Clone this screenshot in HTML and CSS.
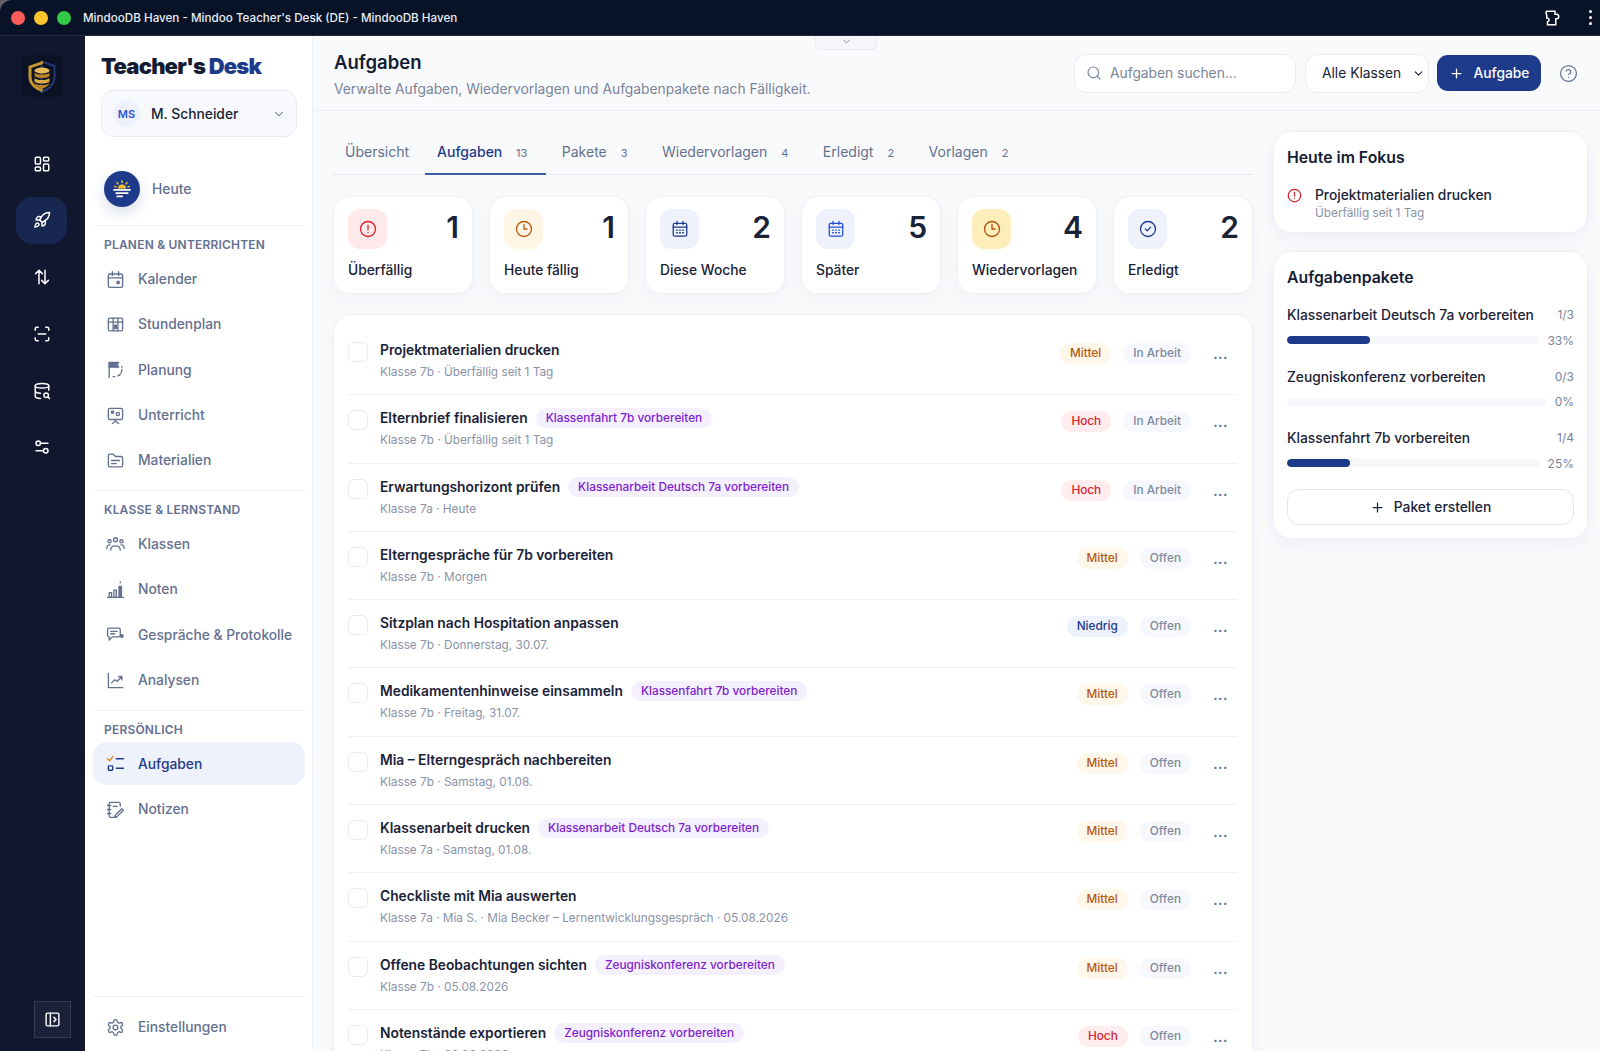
FILE: index.html
```html
<!DOCTYPE html>
<html lang="de">
<head>
  <meta charset="UTF-8" />
  <title>MindooDB Haven - Mindoo Teacher's Desk (DE)</title>
  <link rel="stylesheet" href="styles.css">
</head>
<body>
<div class="window">
  <div class="titlebar">
    <span class="light red"></span><span class="light yellow"></span><span class="light green"></span>
    <span class="win-title">MindooDB Haven - Mindoo Teacher's Desk (DE) - MindooDB Haven</span>
    <svg class="puzzle" viewBox="0 0 24 24"><path d="M5 3h11v4h2a2 2 0 0 1 0 6h-1v8H6v-4a2.5 2.5 0 0 0-1-5V9L4 4z"/></svg>
    <span class="kebab"><i></i><i></i><i></i></span>
  </div>

  <div class="app">
    <nav class="rail">
      <div class="logo">
        <svg viewBox="0 0 29 33" width="29" height="33">
          <path d="M14.500 1.500 27.500 6v11c0 7-5 12-13 15z" fill="none" stroke="#24396f" stroke-width="2"/>
          <path d="M16 1 1.500 6v11c0 7 5.500 12 13.500 15l1-2.500C9 27 4.500 23 4.500 16.500V8L16 4z" fill="#c8962f"/>
          <ellipse cx="15" cy="10.500" rx="7.500" ry="3" fill="#e9bb57"/>
          <path d="M7.500 12.500c2 2.800 13 2.800 15 0v3.500c-2 2.800-13 2.800-15 0z" fill="#b58427"/>
          <path d="M7.500 18c2 2.800 13 2.800 15 0v3.500c-2 2.800-13 2.800-15 0z" fill="#d9a944"/>
          <path d="M7.500 23c2 2.800 13 2.800 15 0v1c-3 3-5 4-7.500 5-3-1-5.500-2.500-7.500-5z" fill="#b58427"/>
        </svg>
      </div>
      <a class="rail-btn"><svg class="ico" viewBox="0 0 24 24"><rect x="3" y="3" width="7" height="9" rx="1.5"/><rect x="14" y="3" width="7" height="5" rx="1.5"/><rect x="14" y="12" width="7" height="9" rx="1.5"/><rect x="3" y="16" width="7" height="5" rx="1.5"/></svg></a>
      <a class="rail-btn on"><svg class="ico" viewBox="0 0 24 24"><path d="M4.5 16.500c-1.500 1.300-2 5-2 5s3.700-.5 5-2c.7-.8.7-2.100-.1-2.900a2.200 2.200 0 0 0-2.900-.1z"/><path d="m12 15-3-3a22 22 0 0 1 2-3.950A12.900 12.900 0 0 1 22 2c0 2.720-.78 7.500-6 11a22 22 0 0 1-4 2z"/><path d="M9 12H4s.55-3.030 2-4c1.620-1.080 5 0 5 0"/><path d="M12 15v5s3.030-.55 4-2c1.080-1.620 0-5 0-5"/></svg></a>
      <a class="rail-btn"><svg class="ico" viewBox="0 0 24 24"><path d="M8 3 3.500 7.500M8 3l4.500 4.500M8 3v18M16 21l-4.500-4.500M16 21l4.500-4.500M16 21V3"/></svg></a>
      <a class="rail-btn"><svg class="ico" viewBox="0 0 24 24"><path d="M3 7V5a2 2 0 0 1 2-2h2M17 3h2a2 2 0 0 1 2 2v2M21 17v2a2 2 0 0 1-2 2h-2M7 21H5a2 2 0 0 1-2-2v-2M7 12h10"/></svg></a>
      <a class="rail-btn"><svg class="ico" viewBox="0 0 24 24"><ellipse cx="12" cy="5" rx="9" ry="3"/><path d="M3 5v14c0 1.500 3 2.800 7 3M21 5v6M3 12c0 1.500 3 2.800 7 3"/><circle cx="17.500" cy="17.500" r="3"/><path d="m20 20 2 2"/></svg></a>
      <a class="rail-btn"><svg class="ico" viewBox="0 0 24 24"><circle cx="7" cy="7" r="3"/><path d="M10 7h10M4 17h10"/><circle cx="17" cy="17" r="3"/></svg></a>
      <a class="collapse"><svg class="ico" viewBox="0 0 24 24"><rect x="3" y="3" width="18" height="18" rx="2"/><path d="M9 3v18M14 9l3 3-3 3"/></svg></a>
    </nav>

    <aside class="sidebar">
      <div class="brand">Teacher's <b>Desk</b></div>
      <div class="user-select">
        <span class="avatar">MS</span>
        <span class="user-name">M. Schneider</span>
        <svg class="ico chev" viewBox="0 0 24 24"><path d="m6 9 6 6 6-6"/></svg>
      </div>
      <a class="today">
        <span class="today-ico">
          <svg viewBox="0 0 24 24" width="22" height="22">
            <path d="M7.500 11.500a4.500 4.500 0 0 1 9 0z" fill="#f4c430"/>
            <path d="M12 2.500v3M6 4.500l2 2.500M18 4.500l-2 2.500M3.500 9l2.500 1M20.500 9 18 10" stroke="#f4c430" stroke-width="1.600" fill="none"/>
            <path d="M2.500 13h19M5 16.500h14M6 20h7" stroke="#fff" stroke-width="1.800" fill="none"/>
          </svg>
        </span>
        Heute
      </a>
      <hr class="nav-sep">
      <div class="nav-label">PLANEN &amp; UNTERRICHTEN</div>
      <a class="nav-item"><svg class="ico" viewBox="0 0 24 24"><rect x="3" y="5" width="18" height="17" rx="2"/><path d="M8 2v5M16 2v5M3 10h18"/><rect x="14" y="14.500" width="2.500" height="2.500" fill="currentColor"/></svg>Kalender</a>
      <a class="nav-item"><svg class="ico" viewBox="0 0 24 24"><rect x="3" y="4" width="18" height="16" rx="2"/><path d="M3 9h18M9 4v16M15 4v16"/><rect x="11" y="13" width="2" height="4" fill="currentColor"/></svg>Stundenplan</a>
      <a class="nav-item"><svg class="ico" viewBox="0 0 24 24"><path d="M4 22V3"/><path d="M4 3h12l-2 3 2 3H4z" fill="currentColor"/><path d="M20 12c0 4-2 7-5 8M9 21h2M20 8v1" stroke-dasharray="4 2"/></svg>Planung</a>
      <a class="nav-item"><svg class="ico" viewBox="0 0 24 24"><rect x="3" y="3" width="18" height="14" rx="2"/><rect x="7" y="6.500" width="2.500" height="2.500" fill="currentColor"/><circle cx="15" cy="10" r="2"/><path d="M12 17v2M12 19l-4 3M12 19l4 3"/></svg>Unterricht</a>
      <a class="nav-item"><svg class="ico" viewBox="0 0 24 24"><path d="M3 6a2 2 0 0 1 2-2h4l3 3h7a2 2 0 0 1 2 2v9a2 2 0 0 1-2 2H5a2 2 0 0 1-2-2z"/><path d="M7 12h10M7 16h6"/></svg>Materialien</a>
      <hr class="nav-sep">
      <div class="nav-label">KLASSE &amp; LERNSTAND</div>
      <a class="nav-item"><svg class="ico wide" viewBox="0 0 24 24"><circle cx="12" cy="6" r="2.500"/><circle cx="4.500" cy="8" r="2"/><circle cx="19.500" cy="8" r="2"/><path d="M6 19c0-7 12-7 12 0M1 17c0-3 2-5 4-4.500M23 17c0-3-2-5-4-4.500"/></svg>Klassen</a>
      <a class="nav-item"><svg class="ico" viewBox="0 0 24 24"><path d="M2 22h20"/><rect x="4" y="16" width="3" height="6"/><rect x="10" y="13" width="3" height="9"/><rect x="16.500" y="8" width="3" height="14" fill="currentColor"/><path d="M18 2.500v1"/></svg>Noten</a>
      <a class="nav-item"><svg class="ico" viewBox="0 0 24 24"><path d="M4 4h12a2 2 0 0 1 2 2v7a2 2 0 0 1-2 2H8l-4 4v-4a2 2 0 0 1-2-2V6a2 2 0 0 1 2-2z"/><path d="M6 8h8M6 11h5"/><circle cx="20" cy="14" r="2.500" fill="currentColor" stroke="none"/></svg>Gespräche &amp; Protokolle</a>
      <a class="nav-item"><svg class="ico" viewBox="0 0 24 24"><path d="M3 3v18h18"/><path d="m7 15 4-4 3 2 6-6M16 7h4v4"/></svg>Analysen</a>
      <hr class="nav-sep">
      <div class="nav-label">PERSÖNLICH</div>
      <a class="nav-item active">
        <svg class="ico" viewBox="0 0 24 24"><path d="m2 6 2.500 2.500L9 3" stroke="#d98a1f"/><path d="M13 6h9M13 18h9"/><rect x="3" y="15" width="5.500" height="5.500" rx="1"/></svg>Aufgaben</a>
      <a class="nav-item"><svg class="ico" viewBox="0 0 24 24"><path d="M18 8V5a2 2 0 0 0-2-2H6a2 2 0 0 0-2 2v15a2 2 0 0 0 2 2h7"/><path d="M2 7h4M2 12h4M2 17h4M9 8h5"/><path d="m20 11 2 2-8 8-3 1 1-3z"/></svg>Notizen</a>
      <div class="sidebar-foot">
        <a class="nav-item"><svg class="ico" viewBox="0 0 24 24"><path d="M12.200 2h-.4a2 2 0 0 0-2 2v.2a2 2 0 0 1-1 1.700l-.4.300a2 2 0 0 1-2 0l-.2-.1a2 2 0 0 0-2.700.7l-.2.400a2 2 0 0 0 .7 2.700l.2.100a2 2 0 0 1 1 1.700v.5a2 2 0 0 1-1 1.700l-.2.100a2 2 0 0 0-.7 2.700l.2.400a2 2 0 0 0 2.700.7l.2-.1a2 2 0 0 1 2 0l.4.300a2 2 0 0 1 1 1.700v.2a2 2 0 0 0 2 2h.4a2 2 0 0 0 2-2v-.2a2 2 0 0 1 1-1.700l.4-.3a2 2 0 0 1 2 0l.2.100a2 2 0 0 0 2.700-.7l.2-.4a2 2 0 0 0-.7-2.700l-.2-.1a2 2 0 0 1-1-1.700v-.5a2 2 0 0 1 1-1.700l.2-.1a2 2 0 0 0 .7-2.700l-.2-.4a2 2 0 0 0-2.700-.7l-.2.100a2 2 0 0 1-2 0l-.4-.3a2 2 0 0 1-1-1.700V4a2 2 0 0 0-2-2z"/><circle cx="12" cy="12" r="3"/></svg>Einstellungen</a>
      </div>
    </aside>

    <main class="main">
      <div class="pull-tab"><svg class="ico" viewBox="0 0 24 24"><path d="m6 9 6 6 6-6"/></svg></div>
      <header class="page-head">
        <div class="page-titles">
          <h1>Aufgaben</h1>
          <p>Verwalte Aufgaben, Wiedervorlagen und Aufgabenpakete nach Fälligkeit.</p>
        </div>
        <div class="search">
          <svg class="ico" viewBox="0 0 24 24"><circle cx="11" cy="11" r="8"/><path d="m21 21-4.300-4.300"/></svg>
          Aufgaben suchen...
        </div>
        <div class="class-select">Alle Klassen <svg class="ico" viewBox="0 0 24 24"><path d="m6 9 6 6 6-6"/></svg></div>
        <button class="add-btn"><svg class="ico" viewBox="0 0 24 24"><path d="M5 12h14M12 5v14"/></svg>Aufgabe</button>
        <svg class="ico help" viewBox="0 0 24 24"><circle cx="12" cy="12" r="10"/><path d="M9.100 9a3 3 0 0 1 5.800 1c0 2-3 3-3 3M12 17h.01"/></svg>
      </header>

      <div class="content">
        <section class="col-left">
          <div class="tabs">
            <a class="tab">Übersicht</a>
            <a class="tab current">Aufgaben <small>13</small></a>
            <a class="tab">Pakete <small>3</small></a>
            <a class="tab">Wiedervorlagen <small>4</small></a>
            <a class="tab">Erledigt <small>2</small></a>
            <a class="tab">Vorlagen <small>2</small></a>
          </div>

          <div class="stats">
            <div class="stat">
              <div class="stat-top"><span class="stat-ico red"><svg class="ico" viewBox="0 0 24 24"><circle cx="12" cy="12" r="10"/><path d="M12 7v6M12 16.500h.01"/></svg></span><strong>1</strong></div>
              <span class="stat-label">Überfällig</span>
            </div>
            <div class="stat">
              <div class="stat-top"><span class="stat-ico amber"><svg class="ico" viewBox="0 0 24 24"><circle cx="12" cy="12" r="10"/><path d="M12 6v6h4"/></svg></span><strong>1</strong></div>
              <span class="stat-label">Heute fällig</span>
            </div>
            <div class="stat">
              <div class="stat-top"><span class="stat-ico navy"><svg class="ico" viewBox="0 0 24 24"><use href="#cal"/></svg></span><strong>2</strong></div>
              <span class="stat-label">Diese Woche</span>
            </div>
            <div class="stat">
              <div class="stat-top"><span class="stat-ico blue"><svg class="ico" viewBox="0 0 24 24"><use href="#cal"/></svg></span><strong>5</strong></div>
              <span class="stat-label">Später</span>
            </div>
            <div class="stat">
              <div class="stat-top"><span class="stat-ico gold"><svg class="ico" viewBox="0 0 24 24"><circle cx="12" cy="12" r="10"/><path d="M12 6v6h4"/></svg></span><strong>4</strong></div>
              <span class="stat-label">Wiedervorlagen</span>
            </div>
            <div class="stat">
              <div class="stat-top"><span class="stat-ico navy"><svg class="ico" viewBox="0 0 24 24"><circle cx="12" cy="12" r="10"/><path d="m8.500 12 2.500 2.500 4.500-5"/></svg></span><strong>2</strong></div>
              <span class="stat-label">Erledigt</span>
            </div>
          </div>

          <div class="task-card">
            <div class="task">
              <span class="check"></span>
              <div class="task-body"><div class="task-title">Projektmaterialien drucken</div><div class="task-meta">Klasse 7b · Überfällig seit 1 Tag</div></div>
              <span class="pill mid">Mittel</span><span class="pill state">In Arbeit</span><span class="dots">...</span>
            </div>
            <div class="task">
              <span class="check"></span>
              <div class="task-body"><div class="task-title">Elternbrief finalisieren <span class="tag">Klassenfahrt 7b vorbereiten</span></div><div class="task-meta">Klasse 7b · Überfällig seit 1 Tag</div></div>
              <span class="pill high">Hoch</span><span class="pill state">In Arbeit</span><span class="dots">...</span>
            </div>
            <div class="task">
              <span class="check"></span>
              <div class="task-body"><div class="task-title">Erwartungshorizont prüfen <span class="tag">Klassenarbeit Deutsch 7a vorbereiten</span></div><div class="task-meta">Klasse 7a · Heute</div></div>
              <span class="pill high">Hoch</span><span class="pill state">In Arbeit</span><span class="dots">...</span>
            </div>
            <div class="task">
              <span class="check"></span>
              <div class="task-body"><div class="task-title">Elterngespräche für 7b vorbereiten</div><div class="task-meta">Klasse 7b · Morgen</div></div>
              <span class="pill mid">Mittel</span><span class="pill state">Offen</span><span class="dots">...</span>
            </div>
            <div class="task">
              <span class="check"></span>
              <div class="task-body"><div class="task-title">Sitzplan nach Hospitation anpassen</div><div class="task-meta">Klasse 7b · Donnerstag, 30.07.</div></div>
              <span class="pill low">Niedrig</span><span class="pill state">Offen</span><span class="dots">...</span>
            </div>
            <div class="task">
              <span class="check"></span>
              <div class="task-body"><div class="task-title">Medikamentenhinweise einsammeln <span class="tag">Klassenfahrt 7b vorbereiten</span></div><div class="task-meta">Klasse 7b · Freitag, 31.07.</div></div>
              <span class="pill mid">Mittel</span><span class="pill state">Offen</span><span class="dots">...</span>
            </div>
            <div class="task">
              <span class="check"></span>
              <div class="task-body"><div class="task-title">Mia – Elterngespräch nachbereiten</div><div class="task-meta">Klasse 7b · Samstag, 01.08.</div></div>
              <span class="pill mid">Mittel</span><span class="pill state">Offen</span><span class="dots">...</span>
            </div>
            <div class="task">
              <span class="check"></span>
              <div class="task-body"><div class="task-title">Klassenarbeit drucken <span class="tag">Klassenarbeit Deutsch 7a vorbereiten</span></div><div class="task-meta">Klasse 7a · Samstag, 01.08.</div></div>
              <span class="pill mid">Mittel</span><span class="pill state">Offen</span><span class="dots">...</span>
            </div>
            <div class="task">
              <span class="check"></span>
              <div class="task-body"><div class="task-title">Checkliste mit Mia auswerten</div><div class="task-meta">Klasse 7a · Mia S. · Mia Becker – Lernentwicklungsgespräch · 05.08.2026</div></div>
              <span class="pill mid">Mittel</span><span class="pill state">Offen</span><span class="dots">...</span>
            </div>
            <div class="task">
              <span class="check"></span>
              <div class="task-body"><div class="task-title">Offene Beobachtungen sichten <span class="tag">Zeugniskonferenz vorbereiten</span></div><div class="task-meta">Klasse 7b · 05.08.2026</div></div>
              <span class="pill mid">Mittel</span><span class="pill state">Offen</span><span class="dots">...</span>
            </div>
            <div class="task">
              <span class="check"></span>
              <div class="task-body"><div class="task-title">Notenstände exportieren <span class="tag">Zeugniskonferenz vorbereiten</span></div><div class="task-meta">Klasse 7b · 09.08.2026</div></div>
              <span class="pill high">Hoch</span><span class="pill state">Offen</span><span class="dots">...</span>
            </div>
          </div>
        </section>

        <aside class="col-right">
          <div class="side-card focus">
            <h2>Heute im Fokus</h2>
            <div class="focus-item">
              <svg class="ico" viewBox="0 0 24 24"><circle cx="12" cy="12" r="10"/><path d="M12 7v6M12 16.500h.01"/></svg>
              <div><div class="focus-title">Projektmaterialien drucken</div><div class="focus-meta">Überfällig seit 1 Tag</div></div>
            </div>
          </div>
          <div class="side-card">
            <h2>Aufgabenpakete</h2>
            <div class="pack">
              <div class="pack-head"><span>Klassenarbeit Deutsch 7a vorbereiten</span><em>1/3</em></div>
              <div class="pack-bar"><div class="track"><div class="fill" style="width: 33%"></div></div><em>33%</em></div>
            </div>
            <div class="pack">
              <div class="pack-head"><span>Zeugniskonferenz vorbereiten</span><em>0/3</em></div>
              <div class="pack-bar"><div class="track"><div class="fill" style="width: 0%"></div></div><em>0%</em></div>
            </div>
            <div class="pack">
              <div class="pack-head"><span>Klassenfahrt 7b vorbereiten</span><em>1/4</em></div>
              <div class="pack-bar"><div class="track"><div class="fill" style="width: 25%"></div></div><em>25%</em></div>
            </div>
            <button class="pack-btn"><svg class="ico" viewBox="0 0 24 24"><path d="M5 12h14M12 5v14"/></svg>Paket erstellen</button>
          </div>
        </aside>
      </div>
    </main>
  </div>
</div>

<svg width="0" height="0" class="defs">
  <symbol id="cal" viewBox="0 0 24 24"><rect x="3" y="4.500" width="18" height="17" rx="2"/><path d="M8 2v4M16 2v4M3 9.500h18M7.500 13.500h1M11.500 13.500h1M15.500 13.500h1M7.500 17h1M11.500 17h1M15.500 17h1"/></symbol>
</svg>
</body>
</html>
```

FILE: styles.css
```css
* {
  box-sizing: border-box;
  margin: 0;
  padding: 0;
}

html, body {
  height: 1051px;
  overflow: hidden;
}

body {
  background: #5f626b;
  font-family: 'Inter', sans-serif;
  color: #1a2238;
}

a { display: block; }

.defs { position: absolute; }

.ico {
  fill: none;
  stroke: currentColor;
  stroke-width: 2;
  stroke-linecap: round;
  stroke-linejoin: round;
  flex: none;
}

.window {
  height: 1051px;
  border-radius: 12px 0 0 0;
  overflow: hidden;
  display: flex;
  flex-direction: column;
}

/* title bar */
.titlebar {
  height: 36px;
  flex: none;
  background: #081327;
  display: flex;
  align-items: center;
  padding: 0 8px 0 11px;
  color: #e9edf3;
  border-bottom: 1px solid #252c3c;
}

.light {
  width: 14px;
  height: 14px;
  border-radius: 50%;
  margin-right: 9px;
}
.light.red { background: #fc5d58; }
.light.yellow { background: #fdc52a; }
.light.green { background: #35c949; margin-right: 12px; }

.win-title {
  font-size: 11.65px;
  font-weight: 500;
  flex: 1;
}

.puzzle {
  width: 18px;
  height: 18px;
  fill: none;
  stroke: #fff;
  stroke-width: 2;
  margin-right: 28px;
}

.kebab {
  display: flex;
  flex-direction: column;
  gap: 3px;
}
.kebab i {
  width: 3px;
  height: 3px;
  border-radius: 50%;
  background: #fff;
}

.app {
  flex: 1;
  display: flex;
  min-height: 0;
}

/* icon rail */
.rail {
  width: 85px;
  flex: none;
  background: #10172f;
  display: flex;
  flex-direction: column;
  align-items: center;
  color: #fff;
  position: relative;
  padding-top: 19px;
}

.logo {
  width: 42px;
  height: 42px;
  border-radius: 8px;
  background: #0c1226;
  display: flex;
  align-items: center;
  justify-content: center;
  margin-bottom: 43px;
  margin-left: -2px;
}

.rail-btn {
  width: 51px;
  height: 47px;
  border-radius: 16px;
  display: flex;
  align-items: center;
  justify-content: center;
  margin-bottom: 9.8px;
  margin-left: -2px;
}
.rail-btn .ico { width: 18px; height: 18px; }
.rail-btn.on { background: #17274f; }

.collapse {
  position: absolute;
  left: 34px;
  bottom: 13px;
  width: 37px;
  height: 37px;
  background: #1a2138;
  border: 1px solid #343b55;
  display: flex;
  align-items: center;
  justify-content: center;
}
.collapse .ico { width: 17px; height: 17px; }

/* sidebar */
.sidebar {
  width: 228px;
  flex: none;
  background: #fff;
  border-right: 1px solid #eceff5;
  padding: 0 7px 0 8px;
  display: flex;
  flex-direction: column;
}

.brand {
  font-size: 22px;
  font-weight: 900;
  letter-spacing: -0.8px;
  color: #141c33;
  padding: 16px 0 0 8px;
  line-height: 29px;
}
.brand b { color: #1e3a8a; font-weight: 900; }

.user-select {
  margin: 9px 8px 0 8px;
  height: 47px;
  border: 1px solid #e8ebf2;
  border-radius: 12px;
  background: #f8f9fc;
  display: flex;
  align-items: center;
  padding: 0 10px 0 11px;
  flex: none;
}

.avatar {
  width: 27px;
  height: 27px;
  border-radius: 50%;
  background: #edf1fd;
  color: #2f55d4;
  font-size: 11px;
  font-weight: 600;
  display: flex;
  align-items: center;
  justify-content: center;
  margin-right: 11px;
}
.user-name { font-size: 13.8px; font-weight: 500; flex: 1; }
.user-select .chev { width: 14px; height: 14px; color: #64708f; stroke-width: 1.8; }

.today {
  display: flex;
  align-items: center;
  gap: 12px;
  margin: 33.5px 0 0 11px;
  font-size: 13.8px;
  font-weight: 500;
  color: #64708f;
  flex: none;
}
.today-ico {
  width: 36px;
  height: 36px;
  border-radius: 50%;
  background: #1e3a8a;
  display: flex;
  align-items: center;
  justify-content: center;
  box-shadow: 0 6px 14px rgba(30, 58, 138, 0.16);
}

.nav-sep {
  border: 0;
  border-top: 1.5px solid #eff1f6;
  flex: none;
}
.today + .nav-sep { margin-top: 18.5px; }
.nav-item + .nav-sep { margin-top: 6px; }

.nav-label {
  font-size: 12px;
  font-weight: 600;
  letter-spacing: 0.2px;
  color: #64708f;
  padding: 0 0 0 11px;
  line-height: 16px;
  margin-top: 11px;
  margin-bottom: 4.5px;
  flex: none;
}

.nav-item {
  height: 43.3px;
  flex: none;
  margin: 0 0 2px;
  padding-left: 13px;
  display: flex;
  align-items: center;
  gap: 13px;
  border-radius: 14px;
  font-size: 13.8px;
  font-weight: 500;
  color: #64708f;
}
.nav-item .ico { width: 19px; height: 19px; stroke-width: 1.7; }
.nav-item .ico.wide { width: 21px; margin-right: -1px; margin-left: -1px; }
.nav-item.active { background: #eef2fc; color: #1e3a8a; }

.sidebar-foot {
  margin-top: auto;
  border-top: 1.5px solid #eff1f6;
  padding: 9px 0 0;
}

/* main */
.main {
  flex: 1;
  min-width: 0;
  background: #f9fafc;
  position: relative;
  display: flex;
  flex-direction: column;
}

.pull-tab {
  position: absolute;
  top: 0;
  left: 502px;
  width: 62px;
  height: 14px;
  background: #f5f6fa;
  border: 1px solid #e8ebf2;
  border-top: 0;
  border-radius: 0 0 6px 6px;
  text-align: center;
  color: #7c869e;
  line-height: 8px;
}
.pull-tab .ico { width: 11px; height: 11px; }

.page-head {
  height: 75px;
  flex: none;
  border-bottom: 1.5px solid #eceff5;
  display: flex;
  align-items: center;
  padding: 0 22px 0 21px;
}

.page-titles { flex: 1; padding-top: 2px; }
.page-titles h1 {
  font-size: 18.5px;
  font-weight: 600;
  line-height: 24px;
  color: #141c33;
}
.page-titles p {
  font-size: 13.8px;
  color: #7a8499;
  line-height: 20px;
  margin-top: 5px;
}

.search {
  width: 222px;
  height: 39px;
  background: #fff;
  border: 1px solid #e8ebf2;
  border-radius: 12px;
  display: flex;
  align-items: center;
  gap: 8px;
  padding-left: 11px;
  font-size: 13.8px;
  color: #7a8499;
  margin-right: 9px;
}
.search .ico { width: 16px; height: 16px; stroke-width: 1.7; }

.class-select {
  width: 124px;
  height: 39px;
  background: #fff;
  border: 1px solid #e8ebf2;
  border-radius: 12px;
  display: flex;
  align-items: center;
  justify-content: space-between;
  padding: 0 3px 0 16px;
  font-size: 13.8px;
  color: #1a2238;
  margin-right: 8px;
}
.class-select .ico { width: 13px; height: 13px; }

.add-btn {
  width: 104px;
  height: 36px;
  background: #1e3a8a;
  color: #fff;
  border: none;
  border-radius: 11px;
  font: 500 13.8px 'Inter', sans-serif;
  display: flex;
  align-items: center;
  justify-content: center;
  gap: 10px;
  margin-right: 18px;
}
.add-btn .ico { width: 15px; height: 15px; }

.help { width: 19px; height: 19px; color: #64708f; stroke-width: 1.6; }

.content {
  flex: 1;
  min-height: 0;
  display: flex;
  gap: 20px;
  padding: 21px 12px 0 20px;
}

.col-left {
  width: 920px;
  flex: none;
}

/* tabs */
.tabs {
  height: 43px;
  display: flex;
  border-bottom: 1px solid #e4e7ee;
}

.tab {
  padding: 0 12px;
  height: 43px;
  margin-right: 4px;
  line-height: 40px;
  font-size: 14px;
  color: #64708f;
  font-weight: 400;
  white-space: nowrap;
}
.tab small {
  font-size: 11px;
  font-weight: 400;
  color: #64708f;
  margin-left: 10px;
  margin-right: 6.5px;
}
.tab.current {
  color: #1e3a8a;
  font-weight: 500;
  border-bottom: 2px solid #3c5fa8;
}

/* stat cards */
.stats {
  display: grid;
  grid-template-columns: repeat(6, 1fr);
  gap: 16px;
  margin-top: 21px;
}

.stat {
  height: 98px;
  background: #fff;
  border: 1px solid #eef0f6;
  border-radius: 16px;
  box-shadow: 0 6px 18px rgba(30, 40, 80, 0.04);
  padding: 12px 13px 0 14px;
}

.stat-top {
  display: flex;
  justify-content: space-between;
  align-items: flex-start;
}
.stat-top strong {
  font-size: 30px;
  font-weight: 600;
  line-height: 36px;
  color: #1a2238;
}

.stat-ico {
  width: 39px;
  height: 40px;
  border-radius: 12px;
  display: flex;
  align-items: center;
  justify-content: center;
}
.stat-ico .ico { width: 18px; height: 18px; stroke-width: 1.7; }
.stat-ico.red { background: #ffe9ea; color: #d8222c; }
.stat-ico.amber { background: #fff6e6; color: #b85a12; }
.stat-ico.navy { background: #eff2fc; color: #1e3a8a; }
.stat-ico.blue { background: #eff2fc; color: #2450d0; }
.stat-ico.gold { background: #fdeebc; color: #b84f0e; }

.stat-label {
  display: block;
  font-size: 13.8px;
  font-weight: 500;
  line-height: 20px;
  margin-top: 11px;
}

/* task list */
.task-card {
  margin-top: 20px;
  background: #fff;
  border: 1px solid #eef0f6;
  border-radius: 18px;
  padding: 12px 15px 0 14px;
  box-shadow: 0 6px 18px rgba(30, 40, 80, 0.04);
}

.task {
  display: flex;
  align-items: flex-start;
  padding: 13px 0 13.3px;
  border-bottom: 1.5px solid #eff1f6;
}

.check {
  width: 20px;
  height: 20px;
  border: 1px solid #e8ebf2;
  border-radius: 6px;
  margin-top: 2px;
  margin-right: 12px;
  flex: none;
}

.task-body { flex: 1; min-width: 0; }

.task-title {
  font-size: 13.8px;
  font-weight: 600;
  line-height: 20px;
  color: #1a2238;
  display: flex;
  gap: 8px;
}

.tag {
  font-size: 11.8px;
  font-weight: 500;
  line-height: 20px;
  color: #7e22ce;
  background: #f4f0fe;
  border-radius: 10px;
  padding: 0 10px;
}

.task-meta {
  font-size: 11.8px;
  line-height: 18px;
  color: #8a93a8;
  margin-top: 3px;
}

.pill {
  height: 21px;
  line-height: 21px;
  border-radius: 10px;
  font-size: 11.8px;
  font-weight: 500;
  margin-top: 3px;
  padding: 0 10px;
  flex: none;
}
.pill.mid { background: #fff8ea; color: #b85a12; }
.pill.high { background: #ffecee; color: #d8222c; }
.pill.low { background: #eef2fc; color: #1e3a8a; }
.pill.state {
  background: #f6f8fd;
  color: #7f899d;
  margin-left: 12px;
}

.dots {
  width: 33px;
  flex: none;
  margin-left: 13px;
  text-align: center;
  font-size: 13px;
  font-weight: 700;
  letter-spacing: 0.5px;
  line-height: 20px;
  color: #64708f;
  margin-top: 4px;
}

/* right column */
.col-right {
  flex: 1;
  min-width: 0;
  display: flex;
  flex-direction: column;
  gap: 18px;
  margin-top: -1px;
}

.side-card {
  background: #fff;
  border: 1px solid #eef0f6;
  border-radius: 18px;
  box-shadow: 0 6px 18px rgba(30, 40, 80, 0.05);
  padding: 16px 13px 13px;
}

.side-card h2 {
  font-size: 15.8px;
  font-weight: 600;
  line-height: 20px;
  color: #141c33;
}

.focus { height: 102px; }

.focus-item {
  display: flex;
  gap: 13px;
  margin-top: 18px;
}
.focus-item > .ico { width: 15px; height: 15px; color: #d8222c; margin-top: 2px; }
.focus-title { font-size: 13.8px; font-weight: 500; line-height: 18px; }
.focus-meta { font-size: 11.8px; color: #8a93a8; line-height: 16px; margin-top: 1px; }

.pack { margin-top: 17px; }
.pack + .pack { margin-top: 17.5px; }

.pack-head {
  display: flex;
  justify-content: space-between;
  font-size: 13.8px;
  font-weight: 500;
  line-height: 20px;
}
.pack em, .pack-head em {
  font-style: normal;
  font-size: 12px;
  font-weight: 400;
  color: #7a8499;
}

.pack-bar {
  display: flex;
  align-items: center;
  gap: 8px;
  margin-top: 6px;
  height: 18px;
}
.track {
  flex: 1;
  height: 8px;
  background: #f5f7fb;
  border-radius: 4px;
  overflow: hidden;
}
.fill {
  height: 100%;
  background: #1e3a8a;
  border-radius: 4px;
}

.pack-btn {
  width: 100%;
  height: 36px;
  margin-top: 17px;
  background: #fff;
  border: 1px solid #e4e7ee;
  border-radius: 12px;
  font: 500 13.8px 'Inter', sans-serif;
  color: #1a2238;
  display: flex;
  align-items: center;
  justify-content: center;
  gap: 9px;
}
.pack-btn .ico { width: 15px; height: 15px; }
```
